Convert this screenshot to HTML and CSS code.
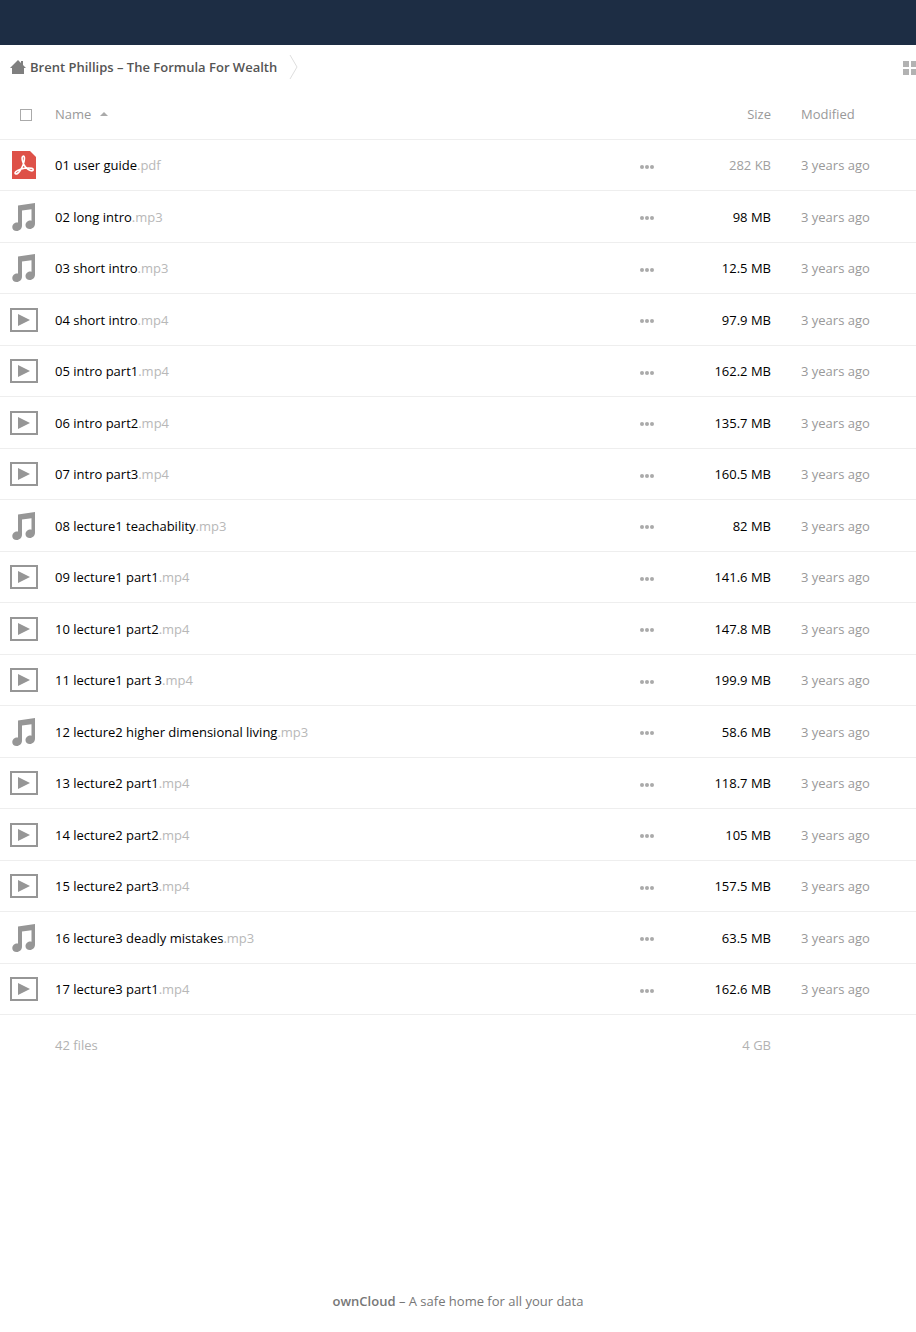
FILE: index.html
```html
<!DOCTYPE html>
<html lang="en">
<head>
<meta charset="utf-8">
<meta name="viewport" content="width=device-width, initial-scale=1">
<title>Brent Phillips – The Formula For Wealth</title>
<link rel="stylesheet" href="styles.css">
</head>
<body>
<svg class="sprite" aria-hidden="true">
  <symbol id="pdf" viewBox="0 0 32 32">
    <path d="M4 2h18l6 6v22H4z" fill="#de5148"/>
    <path d="M15 7.200c2.200-.8 1.600 4.300.3 8C13.800 19.500 10.600 25 8 25c-2.600-.7.300-3.600 4.500-4.800 4.500-1.300 12.700-2 12.700.5 0 2.600-5.200.3-7.700-2.700C14.700 14.800 13 8 15 7.200z" fill="none" stroke="#fff" stroke-width="1.600"/>
  </symbol>
  <symbol id="audio" viewBox="0 0 32 32">
    <path d="M10 4.500 27 2v20.500c0 3.200-2.300 5.500-5.200 5.500-2.500 0-4.300-1.500-4.300-3.800 0-3.200 3.300-5.200 6-4.500V8.200L14 9.500v15c0 3.200-2.400 5.500-5.400 5.500C6 30 4.300 28.500 4.300 26.300c0-3.200 3-5.300 5.700-4.700z" fill="#969696"/>
  </symbol>
  <symbol id="video" viewBox="0 0 32 32">
    <path d="M3 5h26v22H3z" fill="none" stroke="#969696" stroke-width="2"/>
    <path d="M10 10v12l12-6z" fill="#969696"/>
  </symbol>
  <symbol id="dots" viewBox="0 0 16 16">
    <circle cx="3" cy="8" r="2"/><circle cx="8" cy="8" r="2"/><circle cx="13" cy="8" r="2"/>
  </symbol>
</svg>
<header class="topbar"></header>
<nav class="controls" aria-label="Breadcrumb">
  <a class="crumb" href="#">
    <svg class="home" viewBox="0 0 16 16" aria-hidden="true"><path d="M8 1 0 9h2v6h12V9h2l-3-3V2h-2v2z" fill="#7f7f7f"/></svg>
    <span>Brent Phillips – The Formula For Wealth</span>
  </a>
  <svg class="chevron" viewBox="0 0 10 25" aria-hidden="true"><path d="M1 0l7 12-7 12" fill="none" stroke="#dedede"/></svg>
  <button class="view" type="button" aria-label="Grid view"><svg viewBox="0 0 16 16" aria-hidden="true"><path d="M1 1h6v6H1zM9 1h6v6H9zM1 9h6v6H1zM9 9h6v6H9z" fill="#b2b2b2"/></svg></button>
</nav>
<main>
<table class="files">
  <colgroup><col class="c-icon"><col><col class="c-menu"><col class="c-size"><col class="c-date"></colgroup>
  <thead><tr>
    <th class="pick"><input type="checkbox" aria-label="Select all"></th>
    <th><button class="sort" type="button">Name<svg class="arrow" viewBox="0 0 8 4" aria-hidden="true"><path d="M0 4l4-4 4 4z" fill="#aaa"/></svg></button></th>
    <th></th>
    <th class="size"><button class="sort" type="button">Size</button></th>
    <th class="date"><button class="sort" type="button">Modified</button></th>
  </tr></thead>
  <tbody id="rows"></tbody>
  <tfoot><tr><td></td><td>42 files</td><td></td><td class="size">4 GB</td><td></td></tr></tfoot>
</table>
</main>
<footer class="footer"><a href="#">ownCloud</a> – A safe home for all your data</footer>
<script src="files.js"></script>
</body>
</html>
```
FILE: styles.css
```css
* { box-sizing: border-box; }
body {
  margin: 0;
  min-height: 100vh;
  display: flex;
  flex-direction: column;
  overflow-x: hidden;
  background: #fff;
  font: 13px/20px "Open Sans", sans-serif;
  color: #000;
}
a { color: inherit; text-decoration: none; }
button { padding: 0; border: 0; background: none; font: inherit; color: inherit; cursor: pointer; }
svg { display: block; }
.sprite { position: absolute; width: 0; height: 0; }
.topbar { height: 45px; background: #1d2d44; }
.controls { display: flex; align-items: center; height: 45px; padding-left: 10px; overflow: hidden; }
.crumb { display: flex; align-items: center; gap: 4px; padding-bottom: 2px; font-weight: 600; color: #555; }
.home { width: 16px; height: 16px; }
.chevron { width: 10px; height: 25px; margin-left: 12px; }
.view { margin-left: auto; margin-right: -2px; flex: none; }
.view svg { width: 16px; height: 16px; }
.files { width: 100%; table-layout: fixed; border-collapse: separate; border-spacing: 0; }
.c-icon { width: 55px; }
.c-menu { width: 80px; }
.c-size { width: 105px; }
.c-date { width: 115px; }
th, td { padding: 0; text-align: left; vertical-align: middle; }
th, tbody td { border-bottom: 1px solid #eee; }
th { height: 50px; font-weight: 400; color: #999; }
tbody td { height: 52px; }
tbody tr:nth-child(odd) td { height: 51px; }
tfoot td { height: 60px; color: #b2b2b2; }
.pick input { appearance: none; display: block; width: 12px; height: 12px; margin: 0 0 0 20px; border: 1px solid #aaa; background: #fff; }
.sort { display: inline-flex; align-items: center; gap: 9px; padding-bottom: 2px; }
.arrow { width: 8px; height: 4px; }
.icon { width: 32px; height: 32px; margin-left: 8px; }
.ext { color: #b8b8b8; }
.menu { display: block; margin: 3px auto 0 23px; }
.menu svg { width: 16px; height: 16px; fill: #aaa; }
th.size, td.size { padding-right: 30px; text-align: right; white-space: nowrap; }
.small { color: #a0a0a0; }
.date { color: #999; }
.footer { margin-top: auto; padding: 20px 20px 21px; text-align: center; color: #777; }
.footer a { font-weight: 600; }
```
FILE: files.js
```js
const files = [
  ["01 user guide", "pdf", "282 KB"],
  ["02 long intro", "mp3", "98 MB"],
  ["03 short intro", "mp3", "12.5 MB"],
  ["04 short intro", "mp4", "97.9 MB"],
  ["05 intro part1", "mp4", "162.2 MB"],
  ["06 intro part2", "mp4", "135.7 MB"],
  ["07 intro part3", "mp4", "160.5 MB"],
  ["08 lecture1 teachability", "mp3", "82 MB"],
  ["09 lecture1 part1", "mp4", "141.6 MB"],
  ["10 lecture1 part2", "mp4", "147.8 MB"],
  ["11 lecture1 part 3", "mp4", "199.9 MB"],
  ["12 lecture2 higher dimensional living", "mp3", "58.6 MB"],
  ["13 lecture2 part1", "mp4", "118.7 MB"],
  ["14 lecture2 part2", "mp4", "105 MB"],
  ["15 lecture2 part3", "mp4", "157.5 MB"],
  ["16 lecture3 deadly mistakes", "mp3", "63.5 MB"],
  ["17 lecture3 part1", "mp4", "162.6 MB"]
];
const icons = { pdf: "pdf", mp3: "audio", mp4: "video" };

document.getElementById("rows").innerHTML = files.map(([name, ext, size]) => `
  <tr>
    <td><svg class="icon" aria-hidden="true"><use href="#${icons[ext]}"/></svg></td>
    <td><a href="#">${name}<span class="ext">.${ext}</span></a></td>
    <td><button class="menu" type="button" aria-label="Actions for ${name}"><svg aria-hidden="true"><use href="#dots"/></svg></button></td>
    <td class="size${size.endsWith("KB") ? " small" : ""}">${size}</td>
    <td class="date">3 years ago</td>
  </tr>`).join("");
```
